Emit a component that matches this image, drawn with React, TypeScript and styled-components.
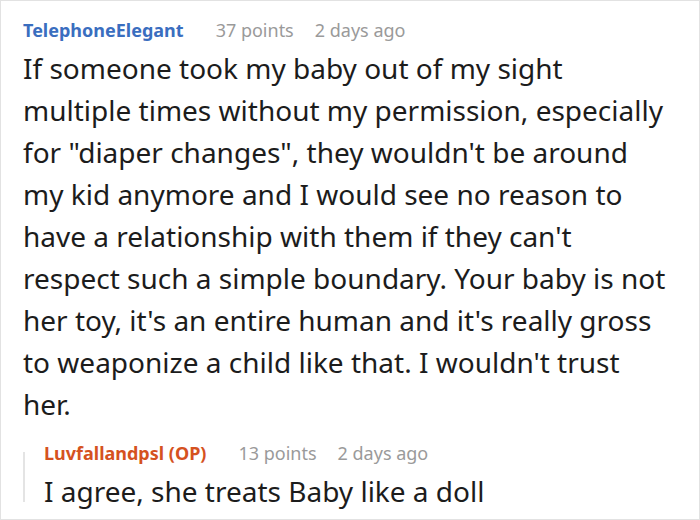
import styled, { createGlobalStyle } from "styled-components";

const Global = createGlobalStyle`
  html, body {
    margin: 0;
    padding: 0;
    background: #ffffff;
  }
  * {
    box-sizing: border-box;
  }
`;

const Card = styled.div`
  width: 700px;
  height: 520px;
  border: 1px solid #e2e2e2;
  background: #fff;
  padding: 17px 25px 0 22px;
  font-family: "Noto Sans", "Open Sans", sans-serif;
  overflow: hidden;
`;

const Meta = styled.div`
  display: flex;
  align-items: center;
  gap: 21px;
  height: 24px;
  font-size: 18px;
  line-height: 24px;
`;

const Author = styled.span<{ $op?: boolean }>`
  font-weight: 700;
  color: ${(p) => (p.$op ? "#d5521f" : "#3a6ebf")};
  margin-right: 11px;
`;

const Info = styled.span`
  color: #9a9a9a;
`;

const Body = styled.p`
  margin: 5px 0 0;
  font-size: 28px;
  line-height: 42px;
  color: #1c1c1c;
`;

const Reply = styled.div`
  display: flex;
  margin: 16px 0 0 0;
`;

const Bar = styled.div`
  width: 2px;
  height: 50px;
  margin-top: 11px;
  margin-right: 19px;
  background: #e4e4e4;
  flex-shrink: 0;
`;

const ReplyContent = styled.div`
  flex: 1;
`;

type CommentProps = {
  author: string;
  points: number;
  time: string;
  op?: boolean;
  text: string;
};

function Comment({ author, points, time, op, text }: CommentProps) {
  return (
    <>
      <Meta>
        <Author $op={op}>{author}</Author>
        <Info>{points} points</Info>
        <Info>{time}</Info>
      </Meta>
      <Body>{text}</Body>
    </>
  );
}

export default function App() {
  return (
    <>
      <Global />
      <Card>
        <Comment
          author="TelephoneElegant"
          points={37}
          time="2 days ago"
          text={`If someone took my baby out of my sight multiple times without my permission, especially for "diaper changes", they wouldn't be around my kid anymore and I would see no reason to have a relationship with them if they can't respect such a simple boundary. Your baby is not her toy, it's an entire human and it's really gross to weaponize a child like that. I wouldn't trust her.`}
        />
        <Reply>
          <Bar />
          <ReplyContent>
            <Comment
              author="Luvfallandpsl (OP)"
              op
              points={13}
              time="2 days ago"
              text="I agree, she treats Baby like a doll"
            />
          </ReplyContent>
        </Reply>
      </Card>
    </>
  );
}
